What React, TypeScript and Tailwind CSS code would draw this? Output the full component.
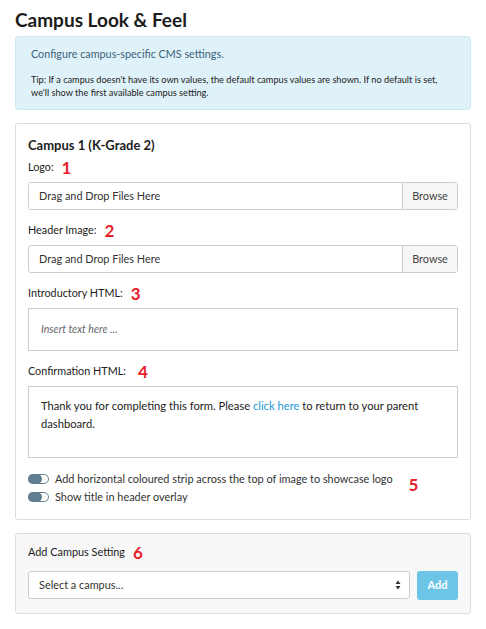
import React from "react";

function Num({ n, className = "" }: { n: string; className?: string }) {
  return <span className={`ml-2 text-[17px] font-bold leading-none text-[#e8202a] ${className}`}>{n}</span>;
}

function Label({ children }: { children: React.ReactNode }) {
  return <div className="flex h-[16px] items-center text-[10.8px] text-[#222]">{children}</div>;
}

function FileInput() {
  return (
    <div className="flex h-[28px] rounded-[3px] border border-[#c5cfd6] text-[10.9px] text-[#333]">
      <div className="flex flex-1 items-center px-[10px]">Drag and Drop Files Here</div>
      <div className="flex w-[55px] items-center justify-center border-l border-[#c5cfd6] bg-[#f7f7f7] text-[#444]">Browse</div>
    </div>
  );
}

function Toggle({ label, children }: { label: string; children?: React.ReactNode }) {
  return (
    <div className="flex h-[16px] items-center">
      <div className="relative h-[10px] w-[21px] rounded-full border border-[#66808f]">
        <div className="absolute left-[-1px] top-[-1px] h-[10px] w-[14px] rounded-full bg-[#5f7f90]" />
      </div>
      <span className="ml-[6px] text-[10.9px] text-[#333]">{label}</span>
      {children}
    </div>
  );
}

export default function App() {
  return (
    <div className="min-h-screen bg-white px-[15px] pt-[6px] text-[#222]" style={{ fontFamily: 'Lato, "Noto Sans", sans-serif' }}>
      <h1 className="text-[19px] font-bold leading-[28px] text-[#1c1c1c]">Campus Look &amp; Feel</h1>

      {/* Info */}
      <div className="mt-[2px] rounded-[3px] border border-[#cfe9f2] bg-[#e0f2f9] px-[15px] pb-[10px] pt-[8px]">
        <p className="text-[10.8px] leading-[18px] text-[#3b6379]">Configure campus-specific CMS settings.</p>
        <p className="mt-[10px] text-[9.2px] leading-[13px] text-[#222]">
          Tip: If a campus doesn't have its own values, the default campus values are shown. If no default is set, we'll show the first available campus setting.
        </p>
      </div>

      {/* Campus card */}
      <div className="mt-[13px] rounded-[3px] border border-[#dcdcdc] px-[12px] pb-[14px] pt-[12px]">
        <h2 className="text-[13px] font-bold leading-[18px] text-[#1c1c1c]">Campus 1 (K-Grade 2)</h2>

        <div className="mt-[5px]">
          <Label>Logo:<Num n="1" /></Label>
        </div>
        <div className="mt-[7px]"><FileInput /></div>

        <div className="mt-[12px]">
          <Label>Header Image:<Num n="2" /></Label>
        </div>
        <div className="mt-[7px]"><FileInput /></div>

        <div className="mt-[12px]">
          <Label>Introductory HTML:<Num n="3" /></Label>
        </div>
        <div className="mt-[7px] flex h-[43px] items-center border border-[#cccccc] px-[12px] text-[10.6px] italic text-[#666]">
          Insert text here ...
        </div>

        <div className="mt-[12px]">
          <Label>Confirmation HTML:<Num n="4" className="ml-[12px]" /></Label>
        </div>
        <div className="mt-[7px] h-[72px] border border-[#cccccc] px-[12px] pt-[10px] text-[11.2px] leading-[18px] text-[#222]">
          Thank you for completing this form. Please <span className="text-[#1a9ad6]">click here</span> to return to your parent dashboard.
        </div>

        <div className="mt-[13px] flex flex-col gap-[2px]">
          <Toggle label="Add horizontal coloured strip across the top of image to showcase logo">
            <Num n="5" className="ml-[16px] mt-[10px]" />
          </Toggle>
          <Toggle label="Show title in header overlay" />
        </div>
      </div>

      {/* Add campus */}
      <div className="mt-[13px] rounded-[3px] border border-[#dcdcdc] bg-[#f8f8f8] px-[12px] pb-[13px] pt-[9px]">
        <div className="flex h-[18px] items-center text-[10.9px] text-[#222]">
          Add Campus Setting<Num n="6" />
        </div>
        <div className="mt-[10px] flex gap-[7px]">
          <div className="flex h-[28px] flex-1 items-center justify-between rounded-[3px] border border-[#c5cfd6] bg-white pl-[10px] pr-[8px] text-[10.9px] text-[#333]">
            <span>Select a campus...</span>
            <svg width="6" height="10" viewBox="0 0 6 10">
              <path d="M3 0.5 L5.5 4 H0.5 Z" fill="#333" />
              <path d="M3 9.5 L5.5 6 H0.5 Z" fill="#333" />
            </svg>
          </div>
          <button className="h-[29px] w-[41px] rounded-[3px] bg-[#6cc5e6] text-[11px] font-bold text-white">Add</button>
        </div>
      </div>
    </div>
  );
}
